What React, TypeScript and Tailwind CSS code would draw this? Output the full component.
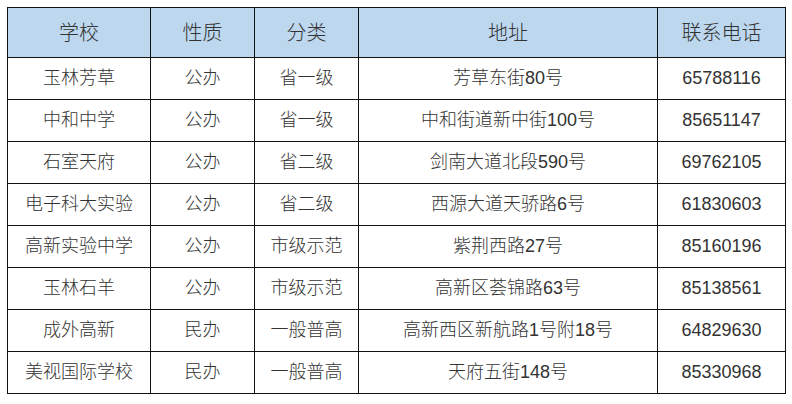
const HEAD = ["学校", "性质", "分类", "地址", "联系电话"]

const ROWS = [
  ["玉林芳草", "公办", "省一级", "芳草东街80号", "65788116"],
  ["中和中学", "公办", "省一级", "中和街道新中街100号", "85651147"],
  ["石室天府", "公办", "省二级", "剑南大道北段590号", "69762105"],
  ["电子科大实验", "公办", "省二级", "西源大道天骄路6号", "61830603"],
  ["高新实验中学", "公办", "市级示范", "紫荆西路27号", "85160196"],
  ["玉林石羊", "公办", "市级示范", "高新区荟锦路63号", "85138561"],
  ["成外高新", "民办", "一般普高", "高新西区新航路1号附18号", "64829630"],
  ["美视国际学校", "民办", "一般普高", "天府五街148号", "85330968"],
]

const WIDTHS = ["w-[143px]", "w-[104px]", "w-[104px]", "w-[299px]", "w-[128px]"]

export default function App() {
  return (
    <div
      className="w-[792px] h-[404px] bg-white pt-[7px] pl-[7px]"
      style={{ fontFamily: '"Liberation Sans", "Noto Sans CJK SC", sans-serif' }}
    >
      <table className="border-collapse table-fixed text-[#333] font-light">
        <thead>
          <tr className="h-[50px] bg-[#bdd7ee]">
            {HEAD.map((h, i) => (
              <th
                key={h}
                className={`${WIDTHS[i]} border-[1.5px] border-[#111] text-[20px] font-light text-center p-0`}
              >
                {h}
              </th>
            ))}
          </tr>
        </thead>
        <tbody>
          {ROWS.map((row) => (
            <tr key={row[0]} className="h-[42px]">
              {row.map((cell, i) => (
                <td
                  key={i}
                  className="border-[1.5px] border-[#111] text-[18px] text-center p-0 whitespace-nowrap"
                >
                  {cell}
                </td>
              ))}
            </tr>
          ))}
        </tbody>
      </table>
    </div>
  )
}
